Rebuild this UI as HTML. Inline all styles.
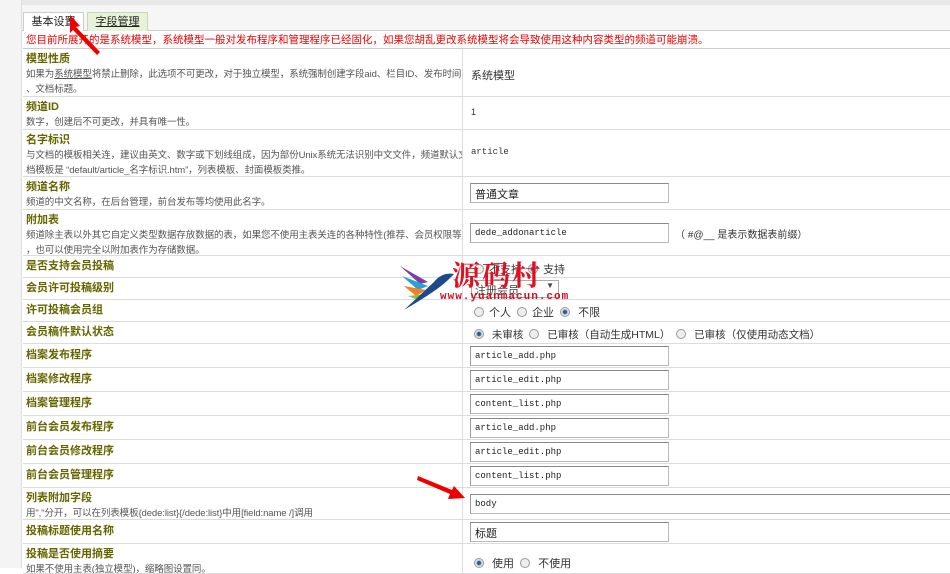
<!DOCTYPE html>
<html><head><meta charset="utf-8">
<style>
*{margin:0;padding:0;box-sizing:border-box}
body{width:950px;height:568px;overflow:hidden;background:#fff;font-family:"Liberation Sans","Noto Sans CJK SC","WenQuanYi Zen Hei",sans-serif;font-size:11px;color:#444;position:relative}
.a{position:absolute}
.row{position:absolute;left:23px;width:927px;border-bottom:1px solid #dcdcdc}
.l{position:absolute;left:0;top:0;bottom:0;width:440px;border-right:1px solid #dcdcdc;padding:3px 0 0 3px;line-height:15px;overflow:hidden}
.t{color:#666600;font-weight:bold;font-size:11px}
.d{color:#555;font-size:9.5px;line-height:15px;white-space:nowrap;letter-spacing:-0.1px}
.r{position:absolute;left:444px;top:0;bottom:0;right:0}
.in{position:absolute;left:3px;width:199px;height:20px;border:1px solid #bbb;border-top-color:#888;border-left-color:#999;background:#fff;font-size:9px;padding:4px 4px;color:#222;font-family:"Liberation Mono","Noto Sans CJK SC",monospace}
.rd{display:inline-block;width:10px;height:10px;border-radius:50%;border:1px solid #999;background:#eee;vertical-align:-1px;margin:0 5px 0 3px}
.rd.on{background:radial-gradient(circle,#2a5d8a 30%,#bcd 45%,#eee 70%)}
.op{position:absolute;left:4px;font-size:11px;color:#333;white-space:nowrap}
</style></head><body>
<div class="a" style="left:0;top:0;width:950px;height:5px;background:#e8e8e8"></div>
<div class="a" style="left:0;top:5px;width:950px;height:26px;background:#f6f6f6;border-bottom:1px solid #ccc"></div>
<div class="a" style="left:0;top:0;width:22px;height:568px;background:#f4f4f4;border-right:1px solid #ddd"></div>
<div class="a" style="left:23px;top:12px;width:61px;height:20px;background:#fff;border:1px solid #ccc;border-bottom:none;text-align:center;line-height:18px;font-size:11px;color:#222">基本设置</div>
<div class="a" style="left:87px;top:12px;width:61px;height:19px;background:#e8f2d8;border:1px solid #c8d8b0;border-bottom:none;text-align:center;line-height:18px;font-size:11px;color:#222;text-decoration:underline">字段管理</div>
<div class="a" style="left:23px;top:31px;width:927px;height:18px;background:#fff;border-bottom:1px solid #ccc;color:#e00;font-size:10.5px;line-height:18px;padding-left:3px;white-space:nowrap">您目前所展开的是系统模型，系统模型一般对发布程序和管理程序已经固化，如果您胡乱更改系统模型将会导致使用这种内容类型的频道可能崩溃。</div>

<div class="row" style="top:49px;height:48px"><div class="l"><div class="t">模型性质</div><div class="d">如果为<u>系统模型</u>将禁止删除，此选项不可更改，对于独立模型，系统强制创建字段aid、栏目ID、发布时间<br>、文档标题。</div></div><div class="r"><div class="op" style="top:18px">系统模型</div></div></div>
<div class="row" style="top:97px;height:33px"><div class="l"><div class="t">频道ID</div><div class="d">数字，创建后不可更改，并具有唯一性。</div></div><div class="r"><div class="op" style="top:10px;font-size:9px">1</div></div></div>
<div class="row" style="top:130px;height:47px"><div class="l"><div class="t">名字标识</div><div class="d">与文档的模板相关连，建议由英文、数字或下划线组成，因为部份Unix系统无法识别中文文件，频道默认文<br>档模板是 “default/article_名字标识.htm”，列表模板、封面模板类推。</div></div><div class="r"><div class="op" style="top:17px;font-size:9px;font-family:'Liberation Mono',monospace">article</div></div></div>
<div class="row" style="top:177px;height:33px"><div class="l"><div class="t">频道名称</div><div class="d">频道的中文名称，在后台管理，前台发布等均使用此名字。</div></div><div class="r"><div class="in" style="top:6px;font-size:11px;padding:2px 4px;font-family:'Noto Sans CJK SC',sans-serif">普通文章</div></div></div>
<div class="row" style="top:210px;height:46px"><div class="l"><div class="t">附加表</div><div class="d">频道除主表以外其它自定义类型数据存放数据的表，如果您不使用主表关连的各种特性(推荐、会员权限等)<br>，也可以使用完全以附加表作为存储数据。</div></div><div class="r"><div class="in" style="top:13px">dede_addonarticle</div><div class="op" style="left:208px;top:16px;font-size:10px">（ #@__ 是表示数据表前缀）</div></div></div>
<div class="row" style="top:256px;height:22px"><div class="l"><div class="t">是否支持会员投稿</div></div><div class="r"><div class="op" style="top:5px"><span class="rd"></span>不支持 <span class="rd on"></span>支持</div></div></div>
<div class="row" style="top:278px;height:22px"><div class="l"><div class="t">会员许可投稿级别</div></div><div class="r"><div class="a" style="left:4px;top:2px;width:88px;height:18px;border:1px solid #aaa;font-size:11px;padding:1px 3px">注册会员<span style="position:absolute;right:4px;top:0;font-size:8px">▼</span></div></div></div>
<div class="row" style="top:300px;height:22px"><div class="l"><div class="t">许可投稿会员组</div></div><div class="r"><div class="op" style="top:4px"><span class="rd"></span>个人 <span class="rd"></span>企业 <span class="rd on"></span> 不限</div></div></div>
<div class="row" style="top:322px;height:22px"><div class="l"><div class="t">会员稿件默认状态</div></div><div class="r"><div class="op" style="top:5px;font-size:10.5px"><span class="rd on"></span> 未审核 <span class="rd"></span> 已审核（自动生成HTML） <span class="rd"></span> 已审核（仅使用动态文档）</div></div></div>
<div class="row" style="top:344px;height:24px"><div class="l" style="padding-top:4px"><div class="t">档案发布程序</div></div><div class="r"><div class="in" style="top:2px">article_add.php</div></div></div>
<div class="row" style="top:368px;height:24px"><div class="l" style="padding-top:4px"><div class="t">档案修改程序</div></div><div class="r"><div class="in" style="top:2px">article_edit.php</div></div></div>
<div class="row" style="top:392px;height:24px"><div class="l" style="padding-top:4px"><div class="t">档案管理程序</div></div><div class="r"><div class="in" style="top:2px">content_list.php</div></div></div>
<div class="row" style="top:416px;height:24px"><div class="l" style="padding-top:4px"><div class="t">前台会员发布程序</div></div><div class="r"><div class="in" style="top:2px">article_add.php</div></div></div>
<div class="row" style="top:440px;height:24px"><div class="l" style="padding-top:4px"><div class="t">前台会员修改程序</div></div><div class="r"><div class="in" style="top:2px">article_edit.php</div></div></div>
<div class="row" style="top:464px;height:24px"><div class="l" style="padding-top:4px"><div class="t">前台会员管理程序</div></div><div class="r"><div class="in" style="top:2px">content_list.php</div></div></div>
<div class="row" style="top:488px;height:32px"><div class="l"><div class="t">列表附加字段</div><div class="d">用","分开，可以在列表模板{dede:list}{/dede:list}中用[field:name /]调用</div></div><div class="r"><div class="in" style="top:6px;width:500px">body</div></div></div>
<div class="row" style="top:520px;height:24px"><div class="l" style="padding-top:4px"><div class="t">投稿标题使用名称</div></div><div class="r"><div class="in" style="top:2px;font-size:11px;padding:2px 4px;font-family:'Noto Sans CJK SC',sans-serif">标题</div></div></div>
<div class="row" style="top:544px;height:30px"><div class="l"><div class="t">投稿是否使用摘要</div><div class="d">如果不使用主表(独立模型)，缩略图设置同。</div></div><div class="r"><div class="op" style="top:11px"><span class="rd on"></span> 使用 <span class="rd"></span> 不使用</div></div></div>

<svg class="a" style="left:398px;top:260px" width="70" height="50" viewBox="0 0 70 50">
<path d="M2 6 L30 22 L22 24Z" fill="#7a3fa0"/>
<path d="M4 16 L30 26 L20 30Z" fill="#2aa0d8"/>
<path d="M6 26 L28 30 L18 36Z" fill="#f08020"/>
<path d="M10 36 L28 34 L20 40Z" fill="#8cc040"/>
<path d="M6 50 L36 22 Q44 12 56 14 L50 20 Q40 30 6 50Z" fill="#1a4a8a"/>
</svg>
<div class="a" style="left:452px;top:258px;font-size:28px;font-weight:bold;color:#e01020;font-family:'Noto Serif CJK SC','Noto Sans CJK SC',serif;letter-spacing:2px;line-height:32px">源码村</div>
<div class="a" style="left:440px;top:291px;font-size:11px;font-weight:bold;color:#d01020;font-family:'Liberation Mono',monospace;letter-spacing:1px">www.yuanmacun.com</div>

<svg class="a" style="left:0;top:0" width="950" height="568">
<path d="M70 15 L80 26 L76 27 L100 52 L97 55 L73 30 L70 33Z" fill="#e00"/>
<path d="M418 476 L452 490 L454 486 L465 498 L448 499 L450 494 L417 480Z" fill="#e00"/>
</svg>
</body></html>
